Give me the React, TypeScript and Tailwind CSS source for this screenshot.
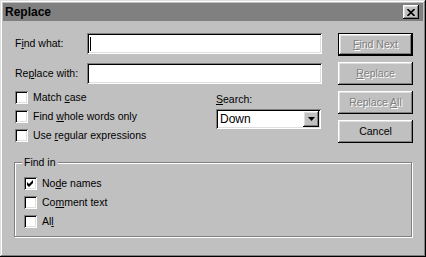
import React from "react";

// classic 3D bevels
const RAISED =
  "shadow-[inset_-1px_-1px_0_#000,inset_1px_1px_0_#fff,inset_-2px_-2px_0_#808080,inset_2px_2px_0_#dfdfdf]";
const SUNKEN =
  "shadow-[inset_1px_1px_0_#808080,inset_-1px_-1px_0_#fff,inset_2px_2px_0_#000,inset_-2px_-2px_0_#dfdfdf]";
const DISABLED_TEXT = "text-[#808080] [text-shadow:1px_1px_0_#fff]";

function Key({ children }: { children: React.ReactNode }) {
  return <span className="underline underline-offset-[1px]">{children}</span>;
}

function Checkbox({ checked, children }: { checked?: boolean; children: React.ReactNode }) {
  return (
    <div className="h-[19px] flex items-center">
      <div className={`w-[13px] h-[13px] bg-white ${SUNKEN} flex items-center justify-center`}>
        {checked && (
          <svg width="13" height="13" viewBox="0 0 13 13">
            <polygon points="3,5 5,7 9,3 9,6 5,10 3,8" fill="#000" />
          </svg>
        )}
      </div>
      <span className="ml-[5px]">{children}</span>
    </div>
  );
}

function Field({ caret }: { caret?: boolean }) {
  return (
    <div className={`w-[235px] h-[21px] bg-white ${SUNKEN} flex items-center pl-[3px]`}>
      {caret && <span className="w-[1px] h-[14px] bg-black" />}
    </div>
  );
}

function Button({
  children,
  disabled,
  isDefault,
}: {
  children: React.ReactNode;
  disabled?: boolean;
  isDefault?: boolean;
}) {
  return (
    <div
      className={
        "w-[75px] h-[23px] flex items-center justify-center " +
        (isDefault ? "border border-black " : "") +
        RAISED
      }
    >
      <span className={disabled ? DISABLED_TEXT : "text-black"}>{children}</span>
    </div>
  );
}

export default function App() {
  return (
    <div
      className="w-[426px] h-[257px] bg-[#c0c0c0] p-[3px] flex flex-col text-[10.5px] leading-[13px] text-black font-['Liberation_Sans',Arial,sans-serif] shadow-[inset_-1px_-1px_0_#000,inset_1px_1px_0_#dfdfdf,inset_-2px_-2px_0_#808080,inset_2px_2px_0_#fff]"
    >
      {/* title bar */}
      <div className="h-[18px] bg-[#808080] flex items-center justify-between pl-[2px] pr-[4px]">
        <span className="font-bold text-[12px]">Replace</span>
        <div className={`w-[16px] h-[14px] bg-[#c0c0c0] ${RAISED} flex items-center justify-center`}>
          <svg width="8" height="7" viewBox="0 0 8 7">
            <path d="M0.5 0 L7.5 7 M7.5 0 L0.5 7" stroke="#000" strokeWidth="1.6" />
          </svg>
        </div>
      </div>

      {/* body */}
      <div className="flex pl-[12px] pt-[12px]">
        <div className="w-[307px] flex flex-col">
          <div className="h-[21px] flex items-center">
            <span className="w-[72px]">
              F<Key>i</Key>nd what:
            </span>
            <Field caret />
          </div>
          <div className="h-[21px] mt-[9px] flex items-center">
            <span className="w-[72px]">
              Re<Key>p</Key>lace with:
            </span>
            <Field />
          </div>
          <div className="flex mt-[4px]">
            <div className="w-[201px] flex flex-col">
              <Checkbox>
                Match <Key>c</Key>ase
              </Checkbox>
              <Checkbox>
                Find <Key>w</Key>hole words only
              </Checkbox>
              <Checkbox>
                Use <Key>r</Key>egular expressions
              </Checkbox>
            </div>
            <div className="w-[105px] flex flex-col pt-[5px]">
              <span>
                <Key>S</Key>earch:
              </span>
              <div className={`mt-[3px] h-[20px] bg-white ${SUNKEN} flex items-center justify-between pl-[4px] pr-[2px]`}>
                <span className="text-[12px]">Down</span>
                <div className={`w-[16px] h-[16px] bg-[#c0c0c0] ${RAISED} flex items-center justify-center`}>
                  <svg width="7" height="4" viewBox="0 0 7 4">
                    <polygon points="0,0 7,0 3.5,4" fill="#000" />
                  </svg>
                </div>
              </div>
            </div>
          </div>
        </div>

        <div className="ml-[16px] flex flex-col gap-[6px]">
          <Button disabled isDefault>
            <Key>F</Key>ind Next
          </Button>
          <Button disabled>
            <Key>R</Key>eplace
          </Button>
          <Button disabled>
            Replace <Key>A</Key>ll
          </Button>
          <Button>Cancel</Button>
        </div>
      </div>

      {/* Find in group */}
      <div className="relative ml-[11px] mt-[17px] w-[398px] h-[75px] border border-[#808080] shadow-[1px_1px_0_#fff,inset_1px_1px_0_#fff] pl-[9px] pt-[11px] flex flex-col">
        <span className="absolute left-[7px] top-[-7px] bg-[#c0c0c0] px-[2px]">Find in</span>
        <Checkbox checked>
          No<Key>d</Key>e names
        </Checkbox>
        <Checkbox>
          Co<Key>m</Key>ment text
        </Checkbox>
        <Checkbox>
          Al<Key>l</Key>
        </Checkbox>
      </div>
    </div>
  );
}
